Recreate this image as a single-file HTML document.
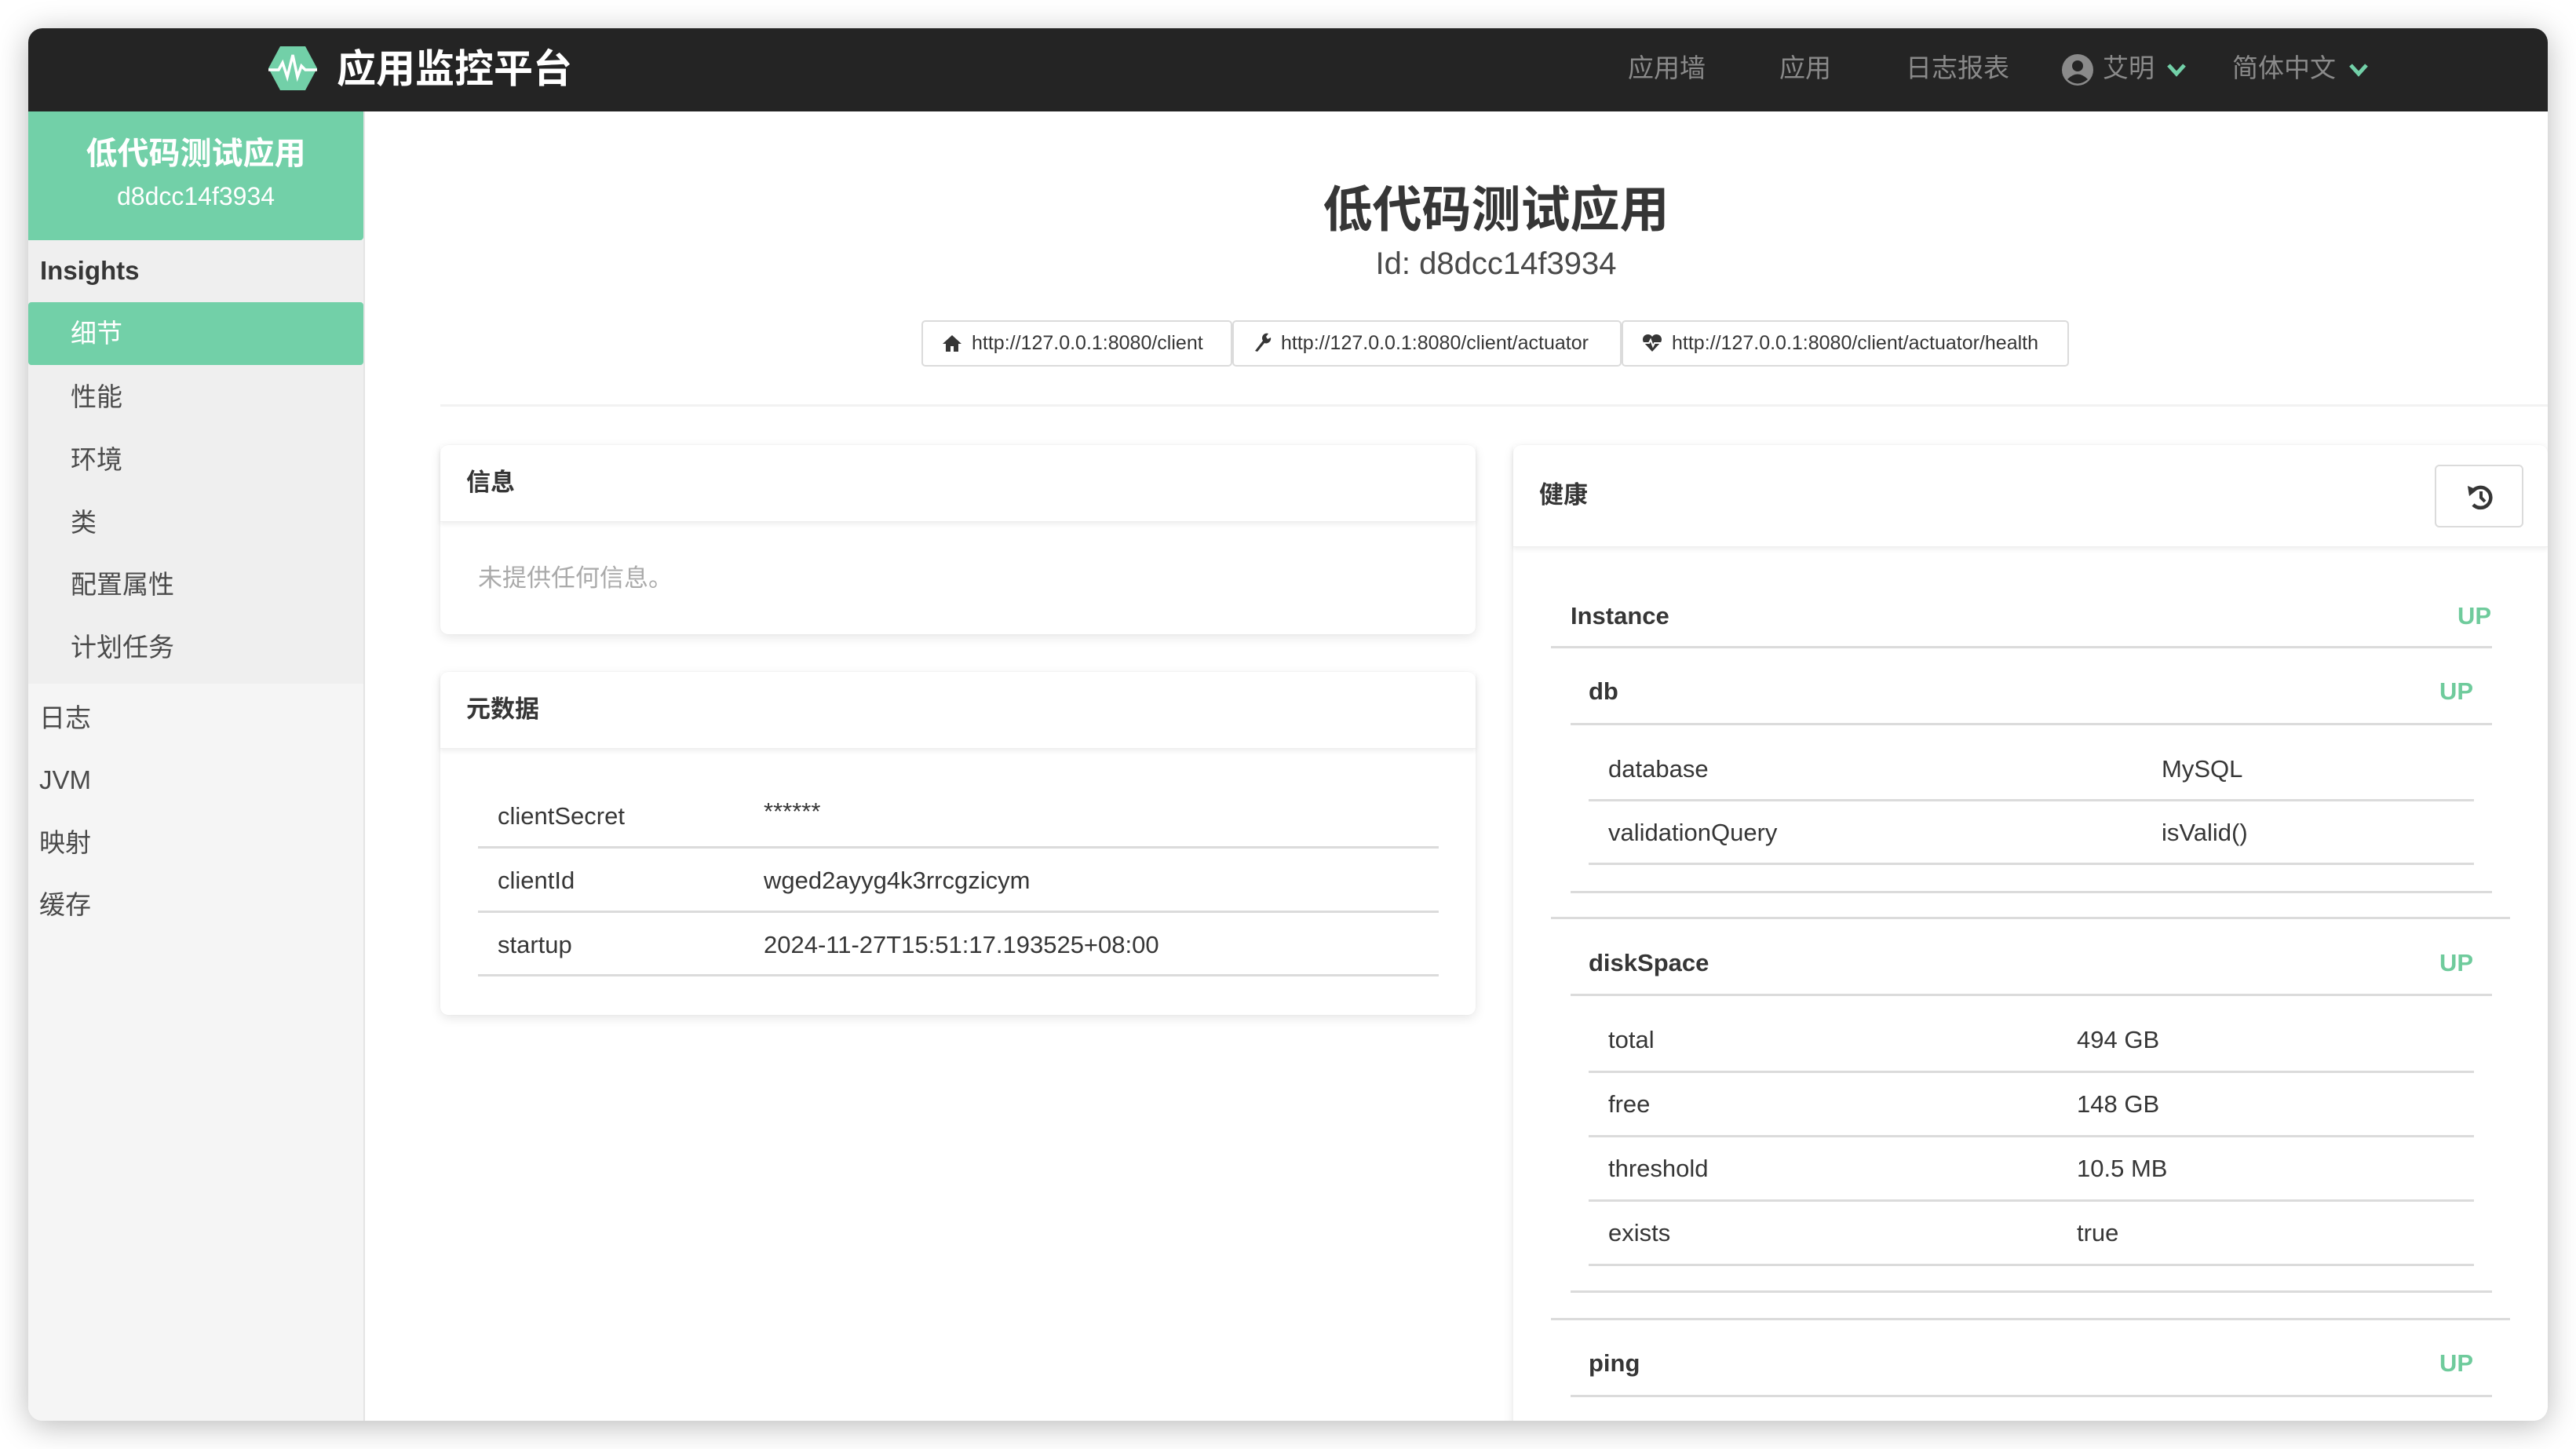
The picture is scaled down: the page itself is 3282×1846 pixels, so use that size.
<!DOCTYPE html>
<html><head><meta charset="utf-8">
<style>
*{box-sizing:border-box;margin:0;padding:0}
body{width:3282px;height:1846px;background:#fff;font-family:"Liberation Sans","Noto Sans CJK SC",sans-serif;color:#363636;position:relative;overflow:hidden}
.abs{position:absolute;white-space:nowrap}
#win{position:absolute;left:36px;top:36px;width:3210px;height:1774px;border-radius:18px;overflow:hidden;background:#fff;box-shadow:0 6px 40px rgba(0,0,0,.28)}
#hdr{position:absolute;left:0;top:0;width:3210px;height:106px;background:#242424}
.nav{position:absolute;top:31px;font-size:33px;color:#8a8a8a;line-height:40px}
#side{position:absolute;left:0;top:106px;width:429px;height:1668px;background:#f5f5f5;border-right:2px solid #e4e4e4}
.card{position:absolute;background:#fff;border-radius:10px;box-shadow:0 4px 14px rgba(0,0,0,.10),0 0 1px rgba(0,0,0,.08)}
.ch{position:absolute;left:0;right:0;top:0;box-shadow:0 3px 6px rgba(0,0,0,.07);border-bottom:1px solid #eee}
.line{position:absolute;height:3px;background:#dbdbdb}
.t31{font-size:31px;line-height:36px}
.b{font-weight:bold}
.up{color:#6fcb9c;font-weight:bold;font-size:31px}
.btn{position:absolute;top:372px;height:59px;border:2px solid #dbdbdb;border-radius:5px;background:#fff;font-size:25px;color:#363636;line-height:55px;padding-left:24px}
.si{position:absolute;font-size:33px;color:#4a4a4a;line-height:40px}
</style></head><body>
<div id="win">
 <div id="hdr">
  <svg class="abs" style="left:305px;top:22px" width="64" height="58" viewBox="0 0 64 58"><polygon points="16,1 48,1 63,29 48,57 16,57 1,29" fill="#72d0a8"/><polyline points="1,31 14,31 19,22 25,40 32,12 38,40 43,26 48,31 63,31" fill="none" stroke="#fff" stroke-width="3.5"/></svg>
  <div class="abs" style="left:393px;top:20px;font-size:50px;color:#fff;font-weight:bold;line-height:64px">应用监控平台</div>
  <div class="nav" style="left:2038px">应用墙</div>
  <div class="nav" style="left:2231px">应用</div>
  <div class="nav" style="left:2392px">日志报表</div>
  <svg class="abs" style="left:2590px;top:32px" width="42" height="42" viewBox="0 0 42 42"><circle cx="21" cy="21" r="20" fill="#8a8a8a"/><circle cx="21" cy="16" r="7" fill="#242424"/><path d="M8 33 Q21 20 34 33 Q21 44 8 33Z" fill="#242424"/></svg>
  <div class="nav" style="left:2643px">艾明</div>
  <svg class="abs" style="left:2724px;top:44px" width="26" height="18" viewBox="0 0 26 18"><polyline points="3,3 13,14 23,3" fill="none" stroke="#72d0a8" stroke-width="5"/></svg>
  <div class="nav" style="left:2808px">简体中文</div>
  <svg class="abs" style="left:2956px;top:44px" width="26" height="18" viewBox="0 0 26 18"><polyline points="3,3 13,14 23,3" fill="none" stroke="#72d0a8" stroke-width="5"/></svg>
 </div>
 <div id="side">
  <div class="abs" style="left:0;top:0;width:427px;height:164px;background:#72d0a8;border-radius:0 0 4px 0"></div>
  <div class="abs" style="left:0;width:427px;top:30px;text-align:center;color:#fff;font-size:40px;font-weight:bold;line-height:48px">低代码测试应用</div>
  <div class="abs" style="left:0;width:427px;top:88px;text-align:center;color:#fff;font-size:32px;line-height:40px">d8dcc14f3934</div>
  <div class="abs" style="left:0;top:164px;width:427px;height:565px;background:#efefef"></div>
  <div class="abs" style="left:15px;top:183px;font-size:33px;font-weight:bold;color:#363636;line-height:40px">Insights</div>
  <div class="abs" style="left:0;top:243px;width:427px;height:80px;background:#72d0a8;border-radius:4px"></div>
  <div class="si" style="left:54px;top:263px;color:#fff">细节</div>
  <div class="si" style="left:54px;top:344px">性能</div>
  <div class="si" style="left:54px;top:424px">环境</div>
  <div class="si" style="left:54px;top:504px">类</div>
  <div class="si" style="left:54px;top:583px">配置属性</div>
  <div class="si" style="left:54px;top:663px">计划任务</div>
  <div class="si" style="left:14px;top:753px">日志</div>
  <div class="si" style="left:14px;top:832px">JVM</div>
  <div class="si" style="left:14px;top:912px">映射</div>
  <div class="si" style="left:14px;top:991px">缓存</div>
 </div>
 <div class="abs" style="left:1000px;width:1740px;top:192px;text-align:center;font-size:63px;font-weight:bold;color:#363636;line-height:80px">低代码测试应用</div>
 <div class="abs" style="left:1000px;width:1740px;top:276px;text-align:center;font-size:40px;color:#4a4a4a;line-height:48px">Id: d8dcc14f3934</div>
 <div class="btn" style="left:1138px;width:396px"><svg width="26" height="24" viewBox="0 0 26 24" style="vertical-align:-4px;margin-right:12px"><path d="M13 2 L1 13 H5 V23 H11 V16 H15 V23 H21 V13 H25 Z" fill="#363636"/></svg>http://127.0.0.1:8080/client</div>
 <div class="btn" style="left:1534px;width:496px"><svg width="24" height="26" viewBox="0 0 24 26" style="vertical-align:-4px;margin-right:12px"><path d="M3 24 L13 11 A6 6 0 0 1 20 2 L17 6 L19 9 L23 7 A6 6 0 0 1 15 14 L6 25 Z" fill="#363636"/></svg>http://127.0.0.1:8080/client/actuator</div>
 <div class="btn" style="left:2030px;width:570px"><svg width="26" height="24" viewBox="0 0 26 24" style="vertical-align:-4px;margin-right:12px"><path d="M13 23 L2 11 A6 6 0 0 1 13 4 A6 6 0 0 1 24 11 Z" fill="#363636"/><polyline points="2,12 9,12 11,8 14,16 16,12 24,12" fill="none" stroke="#fff" stroke-width="2"/></svg>http://127.0.0.1:8080/client/actuator/health</div>
 <div class="abs" style="left:525px;top:479px;width:2685px;height:3px;background:#f2f2f2"></div>

 <div class="card" style="left:525px;top:531px;width:1319px;height:241px">
  <div class="ch" style="height:98px"></div>
  <div class="abs t31 b" style="left:33px;top:30px">信息</div>
  <div class="abs t31" style="left:48px;top:152px;color:#aaa">未提供任何信息。</div>
 </div>
 <div class="card" style="left:525px;top:820px;width:1319px;height:437px">
  <div class="ch" style="height:98px"></div>
  <div class="abs t31 b" style="left:33px;top:30px">元数据</div>
  <div class="abs t31" style="left:73px;top:166px">clientSecret</div><div class="abs t31" style="left:412px;top:160px">******</div>
  <div class="line" style="left:48px;width:1224px;top:222px"></div>
  <div class="abs t31" style="left:73px;top:248px">clientId</div><div class="abs t31" style="left:412px;top:248px">wged2ayyg4k3rrcgzicym</div>
  <div class="line" style="left:48px;width:1224px;top:304px"></div>
  <div class="abs t31" style="left:73px;top:330px">startup</div><div class="abs t31" style="left:412px;top:330px">2024-11-27T15:51:17.193525+08:00</div>
  <div class="line" style="left:48px;width:1224px;top:385px"></div>
 </div>

 <div class="card" style="left:1892px;top:531px;width:1318px;height:1260px">
  <div class="ch" style="height:130px"></div>
  <div class="abs t31 b" style="left:33px;top:46px">健康</div>
  <div class="abs" style="left:1174px;top:25px;width:113px;height:80px;border:2px solid #dbdbdb;border-radius:6px;background:#fff">
   <svg style="position:absolute;left:37px;top:20px" width="38" height="38" viewBox="0 0 38 38"><path d="M9 12 A13 13 0 1 1 10 29" fill="none" stroke="#363636" stroke-width="4.5"/><path d="M3 5 L15 10 L5 18 Z" fill="#363636"/><path d="M20 12 V20 L25 25" fill="none" stroke="#363636" stroke-width="4"/></svg>
  </div>
  <div class="abs t31 b" style="left:73px;top:200px">Instance</div><div class="abs up" style="left:1203px;top:200px">UP</div>
  <div class="line" style="left:48px;width:1199px;top:256px"></div>
  <div class="abs t31 b" style="left:96px;top:296px">db</div><div class="abs up" style="left:1180px;top:296px">UP</div>
  <div class="line" style="left:73px;width:1174px;top:354px"></div>
  <div class="abs t31" style="left:121px;top:395px">database</div><div class="abs t31" style="left:826px;top:395px">MySQL</div>
  <div class="line" style="left:96px;width:1128px;top:451px"></div>
  <div class="abs t31" style="left:121px;top:476px">validationQuery</div><div class="abs t31" style="left:826px;top:476px">isValid()</div>
  <div class="line" style="left:96px;width:1128px;top:532px"></div>
  <div class="line" style="left:73px;width:1174px;top:568px"></div>
  <div class="line" style="left:48px;width:1222px;top:601px"></div>
  <div class="abs t31 b" style="left:96px;top:642px">diskSpace</div><div class="abs up" style="left:1180px;top:642px">UP</div>
  <div class="line" style="left:73px;width:1174px;top:699px"></div>
  <div class="abs t31" style="left:121px;top:740px">total</div><div class="abs t31" style="left:718px;top:740px">494 GB</div>
  <div class="line" style="left:96px;width:1128px;top:797px"></div>
  <div class="abs t31" style="left:121px;top:822px">free</div><div class="abs t31" style="left:718px;top:822px">148 GB</div>
  <div class="line" style="left:96px;width:1128px;top:879px"></div>
  <div class="abs t31" style="left:121px;top:904px">threshold</div><div class="abs t31" style="left:718px;top:904px">10.5 MB</div>
  <div class="line" style="left:96px;width:1128px;top:961px"></div>
  <div class="abs t31" style="left:121px;top:986px">exists</div><div class="abs t31" style="left:718px;top:986px">true</div>
  <div class="line" style="left:96px;width:1128px;top:1043px"></div>
  <div class="line" style="left:73px;width:1174px;top:1077px"></div>
  <div class="line" style="left:48px;width:1222px;top:1112px"></div>
  <div class="abs t31 b" style="left:96px;top:1152px">ping</div><div class="abs up" style="left:1180px;top:1152px">UP</div>
  <div class="line" style="left:73px;width:1174px;top:1210px"></div>
 </div>
</div>
</body></html>
